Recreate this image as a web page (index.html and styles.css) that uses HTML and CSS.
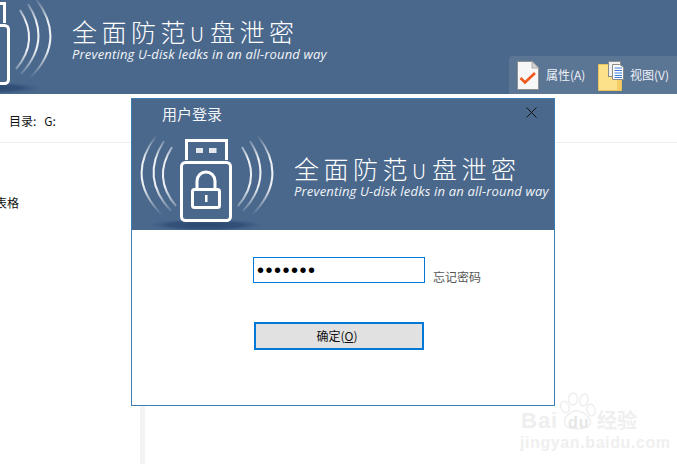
FILE: index.html
```html
<!DOCTYPE html>
<html lang="zh">
<head>
<meta charset="utf-8">
<title>全面防范U盘泄密</title>
<link rel="stylesheet" href="styles.css">
</head>
<body>
<header class="app-header">
  <div class="brand brand-app">
    <svg class="logo" viewBox="135 130 140 100" aria-hidden="true">
      <defs>
        <linearGradient id="fade" x1="0" y1="135" x2="0" y2="215" gradientUnits="userSpaceOnUse">
          <stop offset="0" stop-color="#fff" stop-opacity="0"/>
          <stop offset=".3" stop-color="#fff" stop-opacity=".9"/>
          <stop offset=".65" stop-color="#fff" stop-opacity=".9"/>
          <stop offset="1" stop-color="#fff" stop-opacity="0"/>
        </linearGradient>
        <radialGradient id="shade">
          <stop offset="0" stop-color="#2a4670"/>
          <stop offset=".6" stop-color="#2f4d76" stop-opacity=".85"/>
          <stop offset="1" stop-color="#4a688c" stop-opacity="0"/>
        </radialGradient>
        <symbol id="usb" viewBox="135 130 140 100">
          <ellipse cx="206" cy="225" rx="62" ry="6.500" fill="url(#shade)"/>
          <g fill="none" stroke="url(#fade)" stroke-width="2">
            <path d="M156 136Q124 178 163 216"/>
            <path d="M164 141Q140 178 171 211"/>
            <path d="M172 147Q152 178 176 206"/>
            <path d="M258 136Q290 178 251 216"/>
            <path d="M250 141Q274 178 243 211"/>
            <path d="M242 147Q262 178 238 206"/>
          </g>
          <g fill="none" stroke="#fff" stroke-width="3">
            <path d="M186.500 160V140.500H226.500V160"/>
            <rect x="181.500" y="162.500" width="49" height="58" rx="4"/>
            <rect x="192.500" y="189.500" width="27" height="18" rx="2"/>
            <path d="M197 189V181A9 9 0 0 1 215 181V189"/>
          </g>
          <g fill="#fff">
            <rect x="196" y="148" width="7" height="5" opacity=".85"/>
            <rect x="209" y="148" width="7.500" height="5" opacity=".85"/>
            <rect x="205" y="195" width="2.500" height="7"/>
          </g>
        </symbol>
      </defs>
      <use href="#usb" x="135" y="130" width="140" height="100"/>
    </svg>
    <div class="brand-text">
      <div class="brand-title">全面防范<span class="brand-u">U</span>盘泄密</div>
      <div class="brand-sub">Preventing U-disk ledks in an all-round way</div>
    </div>
  </div>
  <nav class="toolbar">
    <div class="tool tool-props">
      <svg class="tool-icon" width="22" height="29" viewBox="0 0 22 29" aria-hidden="true">
        <path d="M.5.500H15L21.500 7V28.500H.5Z" fill="#f7f7f7" stroke="#8f8f8f"/>
        <path d="M15 .5V7H21.500Z" fill="#d6d6d6" stroke="#aaa"/>
        <path d="M3.500 17L8 21.500L18 12" fill="none" stroke="#f0581c" stroke-width="2.600"/>
      </svg>
      <span>属性(A)</span>
    </div>
    <div class="tool tool-view">
      <svg class="tool-icon" width="26" height="30" viewBox="0 0 26 30" aria-hidden="true">
        <path d="M.5 3.500H12V6H23.500V29.500H.5Z" fill="#fde08a" stroke="#e9c45c"/>
        <rect x="19" y="8" width="4" height="21" fill="#f5cd66"/>
        <rect x="10.500" y=".5" width="12" height="15" fill="#f0f0f0" stroke="#8a8a8a"/>
        <path d="M14.500 3.500H21.500L25.500 6V18.500H14.500Z" fill="#fff" stroke="#8a8a8a"/>
        <path d="M16.500 7H24M16.500 9.500H24M16.500 12H24M16.500 14.500H24M16.500 16.500H24" stroke="#3d7fd9"/>
      </svg>
      <span>视图(V)</span>
    </div>
  </nav>
</header>

<section class="path-row"><span class="path-label">目录:</span><span>G:</span></section>

<main class="workspace">
  <aside class="side-panel"><div class="side-item">表格</div></aside>
  <div class="content"></div>
</main>

<div class="dialog" role="dialog" aria-label="用户登录">
  <div class="dialog-banner">
    <div class="dialog-titlebar">
      <span class="dialog-title">用户登录</span>
      <svg class="dialog-close" width="11" height="11" viewBox="0 0 11 11" aria-hidden="true">
        <path d="M.5.500L10.500 10.500M10.500.5L.5 10.500" stroke="#111" fill="none"/>
      </svg>
    </div>
    <div class="brand brand-dialog">
      <svg class="logo" viewBox="135 130 140 100" aria-hidden="true">
        <use href="#usb" x="135" y="130" width="140" height="100"/>
      </svg>
      <div class="brand-text">
        <div class="brand-title">全面防范<span class="brand-u">U</span>盘泄密</div>
        <div class="brand-sub">Preventing U-disk ledks in an all-round way</div>
      </div>
    </div>
  </div>
  <form class="login-form">
    <div class="password-row">
      <input class="password" type="password" value="1234567" aria-label="密码">
      <a class="forgot">忘记密码</a>
    </div>
    <button class="confirm" type="button">确定(<u>O</u>)</button>
  </form>
</div>

<div class="watermark" aria-hidden="true">
  <svg class="paw" width="36" height="38" viewBox="0 0 36 38">
    <g fill="#fff" stroke="#efefef" stroke-width="1.500">
      <ellipse cx="5" cy="15" rx="4" ry="6" transform="rotate(-20 5 15)"/>
      <ellipse cx="13" cy="7" rx="4.500" ry="6"/>
      <ellipse cx="24" cy="8" rx="4" ry="6" transform="rotate(15 24 8)"/>
      <ellipse cx="31" cy="18" rx="4" ry="6" transform="rotate(-15 31 18)"/>
      <path d="M5 33C2 25 12 18 18 19C25 20 34 29 29 34C23 38 9 38 5 33Z"/>
    </g>
  </svg>
  <div class="wm-line">
    <span class="wm-bai">Bai</span><span class="wm-du">du</span><span class="wm-jy">经验</span>
  </div>
  <div class="wm-url">jingyan.baidu.com</div>
</div>
</body>
</html>
```
FILE: styles.css
```css
* { box-sizing: border-box; }

html, body {
  margin: 0;
  height: 100%;
}

body {
  position: relative;
  width: 677px;
  height: 464px;
  overflow: hidden;
  display: flex;
  flex-direction: column;
  background: #fff;
  color: #111;
  font: 12px/16px "Noto Sans CJK SC", "Noto Sans", sans-serif;
}

.app-header {
  flex: 0 0 94px;
  display: flex;
  justify-content: space-between;
  overflow: hidden;
  background: #4a688c;
}

.brand {
  display: flex;
  gap: 19px;
  height: 100px;
}

.brand-app {
  margin: -7px 0 0 -87px;
}

.logo {
  flex: 0 0 140px;
  width: 140px;
  height: 100px;
}

.brand-text {
  padding-top: 24px;
  color: #fff;
  white-space: nowrap;
}

.brand-title {
  height: 29px;
  font-size: 25px;
  line-height: 29px;
  font-weight: 300;
  letter-spacing: 4.500px;
}

.brand-u {
  display: inline-block;
  width: 20px;
  font-size: 20px;
  letter-spacing: 0;
}

.brand-sub {
  font: italic 13px/16px "Open Sans", sans-serif;
  letter-spacing: .18px;
  color: #f1f4f8;
}

.toolbar {
  flex: 0 0 168px;
  height: 38px;
  margin-top: 56px;
  padding: 5px 0 0 8px;
  display: flex;
  background: #5b7595;
  border-top-left-radius: 4px;
  color: #eef2f7;
}

.tool {
  display: flex;
  align-items: flex-start;
}

.tool span {
  margin-top: 6px;
}

.tool-props {
  width: 81px;
  gap: 7px;
}

.tool-view {
  gap: 6px;
}

.path-row {
  flex: 0 0 49px;
  display: flex;
  align-items: center;
  gap: 8px;
  padding: 6px 0 0 9px;
  border-bottom: 1px solid #eeeeee;
}

.workspace {
  flex: 1;
  display: flex;
}

.side-panel {
  flex: 0 0 145px;
  border-right: 5px solid #f3f3f3;
  padding-top: 52px;
}

.side-item {
  margin-left: -5px;
}

.content {
  flex: 1;
}

.dialog {
  position: absolute;
  left: 131px;
  top: 98px;
  width: 424px;
  height: 308px;
  background: #fff;
  border: 1px solid #3f7cb0;
}

.dialog-banner {
  height: 131px;
  background: #4a688c;
  overflow: hidden;
}

.dialog-titlebar {
  height: 31px;
  padding: 6px 17px 0 30px;
  display: flex;
  justify-content: space-between;
  color: #f2f5f9;
  font-size: 15px;
  line-height: 18px;
}

.dialog-close {
  margin-top: 2px;
}

.brand-dialog {
  margin-left: 3px;
}

.login-form {
  padding: 27px 0 0 121px;
}

.password-row {
  display: flex;
  align-items: flex-start;
}

.password {
  width: 172px;
  height: 26px;
  padding: 0 3px;
  border: 1px solid #0078d7;
  border-radius: 0;
  outline: none;
  background: #fff;
  color: #000;
  font: 20px "Liberation Sans", sans-serif;
  letter-spacing: 1.500px;
}

.forgot {
  margin: 12px 0 0 8px;
  color: #555;
}

.confirm {
  display: block;
  width: 170px;
  height: 28px;
  margin: 37px 0 0 1px;
  padding: 0 4px 0 0;
  border: 2px solid #0078d7;
  border-radius: 0;
  background: #e1e1e1;
  color: #111;
  font: inherit;
}

.watermark {
  position: absolute;
  left: 520px;
  top: 391px;
  width: 125px;
  height: 60px;
  color: #efefef;
}

.paw {
  position: absolute;
  left: 40px;
  top: 1px;
}

.wm-line {
  position: absolute;
  left: 1px;
  top: 16px;
  display: flex;
  align-items: baseline;
  white-space: nowrap;
  line-height: 26px;
}

.wm-bai {
  width: 47px;
  font: bold 22px/26px "Liberation Sans", sans-serif;
  letter-spacing: 1px;
}

.wm-du {
  position: relative;
  width: 29px;
  font: bold 16px/26px "Liberation Sans", sans-serif;
  letter-spacing: 1px;
  color: #e6e6e6;
}

.wm-jy {
  font-size: 20px;
  font-weight: 700;
}

.wm-url {
  position: absolute;
  left: 0;
  top: 45px;
  font: bold 16px/14px "Liberation Sans", sans-serif;
  letter-spacing: .6px;
  white-space: nowrap;
}
```
